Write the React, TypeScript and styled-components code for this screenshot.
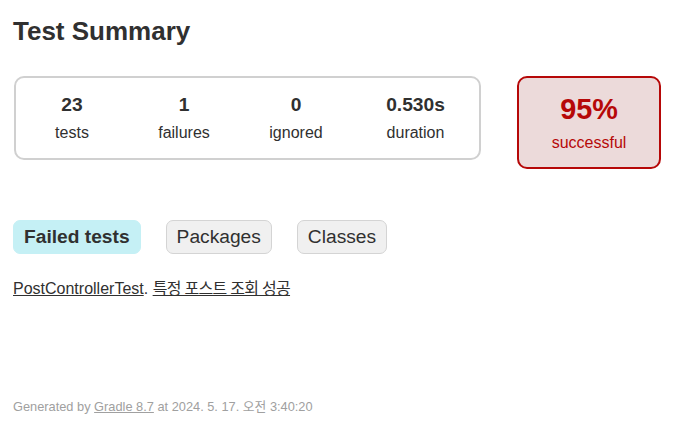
import React from "react";
import styled, { createGlobalStyle } from "styled-components";

const GlobalStyle = createGlobalStyle`
  html, body {
    margin: 0;
    padding: 0;
    background: #ffffff;
  }
  body {
    font-family: "Liberation Sans", Arial, "Noto Sans CJK KR", sans-serif;
    font-size: 16px;
    color: #303030;
  }
`;

const Content = styled.div`
  padding: 16px 13px 0 13px;
`;

const Title = styled.h1`
  margin: 0;
  font-size: 26px;
  line-height: 30px;
  font-weight: bold;
  color: #303030;
`;

const Summary = styled.div`
  display: flex;
  align-items: flex-start;
  margin-top: 30px;
`;

const SummaryGroup = styled.div`
  display: flex;
  border: 2px solid #d0d0d0;
  border-radius: 10px;
  margin-left: 1px;
`;

const InfoBox = styled.div<{ $w: number }>`
  width: ${(p) => p.$w}px;
  padding: 16px 0;
  text-align: center;
`;

const Counter = styled.div`
  font-size: 19.2px;
  line-height: 22px;
  font-weight: bold;
  margin-bottom: 8px;
`;

const Label = styled.div`
  font-size: 16px;
  line-height: 18px;
`;

const SuccessRate = styled.div`
  width: 140px;
  margin-left: 36px;
  border: 2px solid #b60808;
  border-radius: 10px;
  background-color: #ecdada;
  color: #b60808;
  padding: 15px 0 15px 0;
  text-align: center;
`;

const Percent = styled.div`
  font-size: 28.8px;
  line-height: 33px;
  font-weight: bold;
  margin-bottom: 8px;
`;

const TabLinks = styled.ul`
  display: flex;
  list-style: none;
  padding: 0;
  margin: 51px 0 0 0;
`;

const Tab = styled.li<{ $selected?: boolean }>`
  padding: 5px 10px;
  margin-right: 25px;
  border-radius: 7px;
  border: 1px solid ${(p) => (p.$selected ? "#c5f0f5" : "#d4d4d4")};
  background-color: ${(p) => (p.$selected ? "#c5f0f5" : "#f0f0f0")};
  font-size: 19.2px;
  line-height: 22px;
  font-weight: ${(p) => (p.$selected ? "bold" : "normal")};
  color: #303030;
`;

const TestLine = styled.div`
  margin-top: 26px;
  font-size: 16px;
  line-height: 18px;
`;

const Link = styled.a<{ $cjk?: boolean }>`
  color: #303030;
  text-decoration: underline;
  letter-spacing: ${(p) => (p.$cjk ? "-0.7px" : "normal")};
`;

const Footer = styled.div`
  margin-top: 101px;
  font-size: 12.8px;
  line-height: 15px;
  color: #a0a0a0;
  white-space: nowrap;
`;

const FooterLink = styled.a`
  color: #a0a0a0;
  text-decoration: underline;
`;

const counters = [
  { value: "23", label: "tests", w: 112 },
  { value: "1", label: "failures", w: 112 },
  { value: "0", label: "ignored", w: 112 },
  { value: "0.530s", label: "duration", w: 127 },
];

export default function App() {
  return (
    <>
      <GlobalStyle />
      <Content>
        <Title>Test Summary</Title>
        <Summary>
          <SummaryGroup>
            {counters.map((c) => (
              <InfoBox key={c.label} $w={c.w}>
                <Counter>{c.value}</Counter>
                <Label>{c.label}</Label>
              </InfoBox>
            ))}
          </SummaryGroup>
          <SuccessRate>
            <Percent>95%</Percent>
            <Label>successful</Label>
          </SuccessRate>
        </Summary>
        <TabLinks>
          <Tab $selected>Failed tests</Tab>
          <Tab>Packages</Tab>
          <Tab>Classes</Tab>
        </TabLinks>
        <TestLine>
          <Link href="#">PostControllerTest</Link>.{" "}
          <Link href="#" $cjk>특정 포스트 조회 성공</Link>
        </TestLine>
        <Footer>
          Generated by <FooterLink href="#">Gradle 8.7</FooterLink> at 2024. 5. 17. 오전 3:40:20
        </Footer>
      </Content>
    </>
  );
}
